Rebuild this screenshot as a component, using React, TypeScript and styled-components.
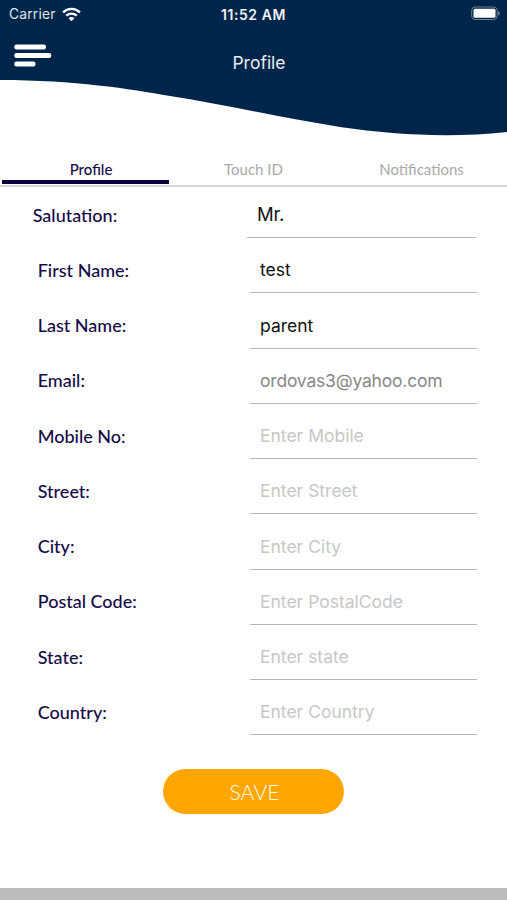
import React from "react";
import styled, { createGlobalStyle } from "styled-components";

const GlobalStyle = createGlobalStyle`
  * { box-sizing: border-box; }
  body { margin: 0; background: #fff; }
`;

const Screen = styled.div`
  display: flex;
  flex-direction: column;
  width: 507px;
  height: 900px;
  overflow: hidden;
  background: #fff;
  font-family: Inter, sans-serif;
`;

const Header = styled.header`
  display: grid;
  height: 152px;
  flex: none;
  color: #fff;
  > * { grid-area: 1 / 1; }
`;

const Wave = styled.svg`
  display: block;
  width: 507px;
  height: 152px;
`;

const HeaderContent = styled.div`
  z-index: 1;
  display: flex;
  flex-direction: column;
`;

const StatusBar = styled.div`
  display: grid;
  grid-template-columns: 1fr auto 1fr;
  align-items: center;
  height: 28px;
  padding: 0 6px 0 9px;
`;

const Carrier = styled.div`
  display: flex;
  align-items: center;
  gap: 6px;
  font-size: 13.8px;
  letter-spacing: 0.2px;
  color: #dfe6ee;
`;

const Clock = styled.div`
  font-size: 14px;
  font-weight: 600;
  letter-spacing: 0.55px;
  padding-right: 3px;
  color: #eef3f8;
`;

const Battery = styled.svg`
  justify-self: end;
`;

const NavBar = styled.div`
  display: grid;
  grid-template-columns: 86px 1fr 86px;
  align-items: start;
  padding: 15px 0 0 14px;
`;

const Title = styled.h1`
  margin: 8px 0 0;
  padding-left: 0;
  padding-right: 3px;
  text-align: center;
  transform: none;
  font-size: 17.5px;
  line-height: 24px;
  font-weight: 400;
  letter-spacing: 0;
  color: #e6ecf3;
`;

const Tabs = styled.nav`
  display: grid;
  grid-template-columns: repeat(3, 1fr);
  height: 35px;
  flex: none;
  padding: 0 2px 0 1px;
  border-bottom: 2px solid #d6d6d6;
`;

const Tab = styled.div<{ $active?: boolean }>`
  height: 32px;
  margin: 0 0 0 1px;
  padding-top: 7px;
  padding-left: ${(p) => (p.$active ? "11px" : "0")};
  text-align: center;
  font: ${(p) => (p.$active ? 500 : 400)} 15px/20px Lato, sans-serif;
  color: ${(p) => (p.$active ? "#160a48" : "#aaa")};
  border-bottom: ${(p) => (p.$active ? "4px solid #0c0140" : "none")};
`;

const Form = styled.form`
  display: flex;
  flex-direction: column;
  flex: none;
`;

const Row = styled.div<{ $first?: boolean }>`
  display: grid;
  grid-template-columns: ${(p) => (p.$first ? "214px 229px" : "212px 227px")};
  height: ${(p) => (p.$first ? "51px" : "55.25px")};
  padding-left: ${(p) => (p.$first ? "33px" : "38px")};
  align-items: end;
`;

const Label = styled.label`
  height: 35.5px;
  margin-left: -0.3px;
  font: 500 18px/24px Lato, sans-serif;
  color: #160a48;
`;

const Field = styled.div<{ $tone: Tone; $large?: boolean }>`
  height: ${(p) => (p.$large ? "37px" : "36px")};
  padding-left: 10px;
  border-bottom: 1.5px solid #b7b7be;
  font-size: ${(p) => (p.$large ? "18.5px" : "17.5px")};
  line-height: 26px;
  letter-spacing: ${(p) =>
    p.$large ? "-0.2px" : p.$tone === "muted" ? "-0.2px" : "0"};
  color: ${(p) => tones[p.$tone]};
`;

const SaveButton = styled.button`
  align-self: center;
  width: 181px;
  height: 45px;
  margin: 34px 0 0;
  padding: 1px 0 0 2px;
  border: 0;
  border-radius: 23px;
  background: #ffa700;
  color: #fffae6;
  font: 300 21px/24px Lato, sans-serif;
  letter-spacing: 0.1px;
`;

const BottomBar = styled.footer`
  height: 12px;
  margin-top: auto;
  flex: none;
  background: #bbb;
`;

type Tone = "value" | "muted" | "placeholder";
const tones: Record<Tone, string> = {
  value: "#111",
  muted: "#888",
  placeholder: "#c7c7c7",
};

const rows: { label: string; text: string; tone: Tone }[] = [
  { label: "Salutation:", text: "Mr.", tone: "value" },
  { label: "First Name:", text: "test", tone: "value" },
  { label: "Last Name:", text: "parent", tone: "value" },
  { label: "Email:", text: "ordovas3@yahoo.com", tone: "muted" },
  { label: "Mobile No:", text: "Enter Mobile", tone: "placeholder" },
  { label: "Street:", text: "Enter Street", tone: "placeholder" },
  { label: "City:", text: "Enter City", tone: "placeholder" },
  { label: "Postal Code:", text: "Enter PostalCode", tone: "placeholder" },
  { label: "State:", text: "Enter state", tone: "placeholder" },
  { label: "Country:", text: "Enter Country", tone: "placeholder" },
];

const WifiIcon = () => (
  <svg width="19" height="15" viewBox="0 0 19 15" fill="none" stroke="#fff">
    <path d="M1.1 5.3C5.8.7 13.2.7 17.9 5.3" strokeWidth="2.4" />
    <path d="M4.2 8.7c3-2.9 7.6-2.9 10.6 0" strokeWidth="2.3" />
    <path d="M6.5 11.2c1.7-1.7 4.3-1.7 6 0l-3 3z" fill="#fff" stroke="none" />
  </svg>
);

const MenuIcon = () => (
  <svg width="38" height="26" viewBox="0 0 38 26" fill="#fff">
    <rect x="0.3" y="1.5" width="31.7" height="5" rx="2.2" />
    <rect x="0.3" y="10" width="37" height="5" rx="2.2" />
    <rect x="0.3" y="18.4" width="21.2" height="5" rx="2.2" />
  </svg>
);

export default function App() {
  return (
    <Screen>
      <GlobalStyle />
      <Header>
        <Wave viewBox="0 0 507 152">
          <path
            fill="#00254b"
            d="M0 0H507V132C450 138 395 135 340 127C283 118 227 105 170 96C130 89 75 80 0 80Z"
          />
        </Wave>
        <HeaderContent>
          <StatusBar>
            <Carrier>
              Carrier
              <WifiIcon />
            </Carrier>
            <Clock>11:52 AM</Clock>
            <Battery width="31" height="16" viewBox="0 0 31 16">
              <rect x="1.7" y="1" width="25.5" height="12.5" rx="3.5" fill="none" stroke="#6d8193" />
              <rect x="3.5" y="2.8" width="22" height="9" rx="1.5" fill="#fff" />
              <path d="M28 5.3c2.6.7 2.6 3.3 0 4z" fill="#6d8193" />
            </Battery>
          </StatusBar>
          <NavBar>
            <MenuIcon />
            <Title>Profile</Title>
          </NavBar>
        </HeaderContent>
      </Header>
      <Tabs>
        <Tab $active>Profile</Tab>
        <Tab>Touch ID</Tab>
        <Tab>Notifications</Tab>
      </Tabs>
      <Form onSubmit={(e) => e.preventDefault()}>
        {rows.map((row, i) => (
          <Row key={row.label} $first={i === 0}>
            <Label>{row.label}</Label>
            <Field $tone={row.tone} $large={i === 0}>
              {row.text}
            </Field>
          </Row>
        ))}
        <SaveButton type="submit">SAVE</SaveButton>
      </Form>
      <BottomBar />
    </Screen>
  );
}
